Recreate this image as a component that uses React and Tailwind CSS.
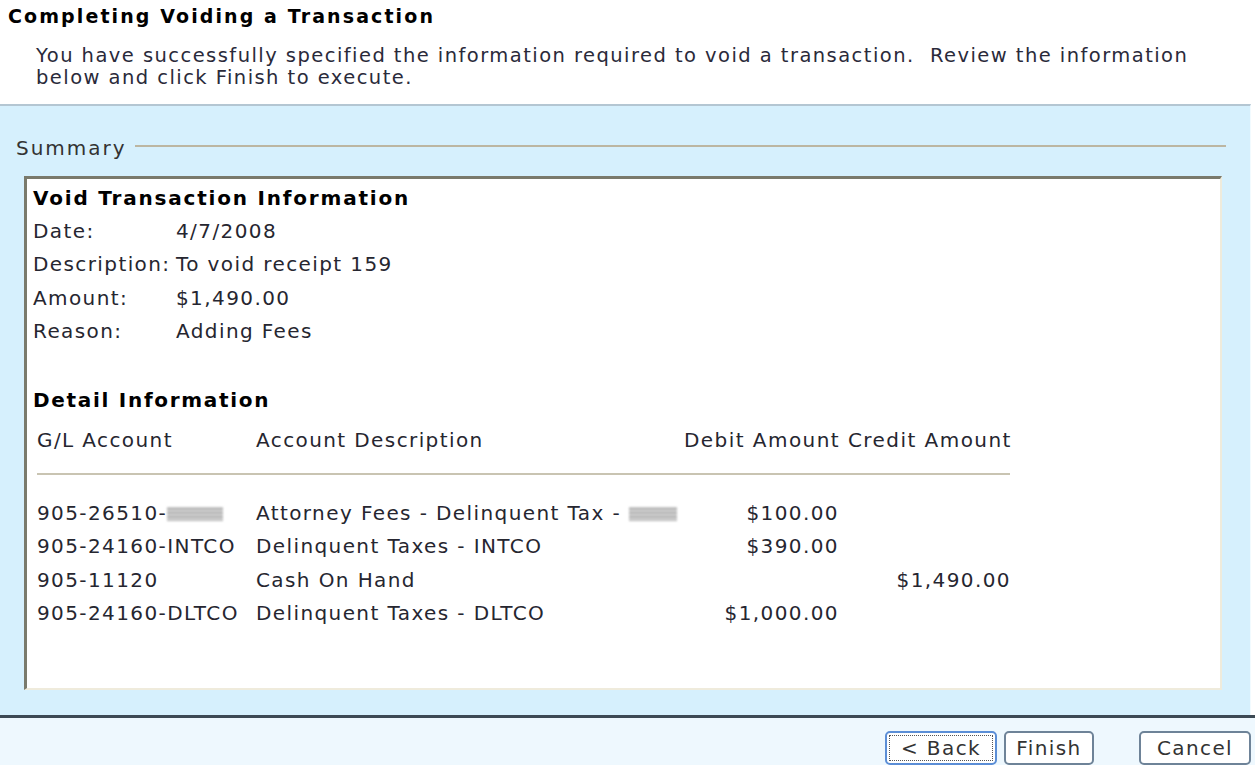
export default function App() {
    const rows = [
        { acct: '905-26510-', blurAcct: true, desc: 'Attorney Fees - Delinquent Tax - ', blurDesc: true, debit: '$100.00', credit: '' },
        { acct: '905-24160-INTCO', desc: 'Delinquent Taxes - INTCO', debit: '$390.00', credit: '' },
        { acct: '905-11120', desc: 'Cash On Hand', debit: '', credit: '$1,490.00' },
        { acct: '905-24160-DLTCO', desc: 'Delinquent Taxes - DLTCO', debit: '$1,000.00', credit: '' },
    ];

    const Blur = ({ w }) => (
        <span className={`inline-block h-[14px] align-middle ${w} bg-[repeating-linear-gradient(180deg,#d0d0d0_0px,#8f8f8f_2px,#e4e4e4_4px)] blur-[1px] opacity-80`}></span>
    );

    return (
        <div className="w-[1255px] h-[765px] bg-white overflow-hidden text-[#262630] font-['DejaVu_Sans',Verdana,sans-serif] flex flex-col">
            {/* header */}
            <div className="pl-[8px] pt-[3px] h-[104px]">
                <div className="text-[19px] font-bold text-black leading-[26px] tracking-[2.1px]">Completing Voiding a Transaction</div>
                <div className="pl-[28px] pt-[16px] text-[19.5px] leading-[22px] text-[#2a2a3a] tracking-[1.45px] whitespace-nowrap">
                    You have successfully specified the information required to void a transaction.&nbsp; Review the information<br />below and click Finish to execute.
                </div>
            </div>

            {/* blue panel */}
            <div className="h-[613px] bg-[#d6f0fd] border-t-2 border-[#b4c6d2] mr-[4px] border-r border-r-[#f2fbff] flex flex-col">
                <div className="flex items-center pl-[16px] pr-[24px] pt-[24px] h-[60px]">
                    <span className="text-[20px] text-[#333] tracking-[2px]">Summary</span>
                    <span className="flex-1 h-[2px] bg-[#bcb6a2] ml-[8px] mt-[-3px]"></span>
                </div>

                <div className="ml-[24px] mr-[28px] mt-[10px] h-[514px] bg-white border-t-[3px] border-l-[3px] border-t-[#7a7a6c] border-l-[#7a7a6c] border-r-2 border-b-2 border-r-[#efebdc] border-b-[#efebdc] pl-[6px] pt-[6px] text-[20px] tracking-[1.4px]">
                    <div className="font-bold text-black leading-[26px] tracking-[1.8px]">Void Transaction Information</div>
                    <div className="leading-[33.5px] mt-[4px]">
                        <div className="flex"><span className="w-[143px]">Date:</span><span>4/7/2008</span></div>
                        <div className="flex"><span className="w-[143px]">Description:</span><span>To void receipt 159</span></div>
                        <div className="flex"><span className="w-[143px]">Amount:</span><span>$1,490.00</span></div>
                        <div className="flex"><span className="w-[143px]">Reason:</span><span>Adding Fees</span></div>
                    </div>

                    <div className="font-bold text-black leading-[26px] mt-[38px] tracking-[1.7px]">Detail Information</div>
                    <div className="flex leading-[26px] mt-[14px] pl-[4px] whitespace-nowrap">
                        <span className="w-[219px]">G/L Account</span>
                        <span className="w-[428px]">Account Description</span>
                        <span className="tracking-[1.45px]">Debit Amount Credit Amount</span>
                    </div>
                    <div className="ml-[4px] w-[973px] h-[2px] bg-[#c9c4b2] mt-[20px]"></div>

                    <div className="leading-[33.5px] mt-[22px] pl-[4px]">
                        {rows.map((r, i) => (
                            <div key={i} className="flex">
                                <span className="w-[219px] whitespace-nowrap">{r.acct}{r.blurAcct && <Blur w="w-[56px]" />}</span>
                                <span className="w-[428px] whitespace-nowrap">{r.desc}{r.blurDesc && <Blur w="w-[48px]" />}</span>
                                <span className="w-[155px] text-right">{r.debit}</span>
                                <span className="w-[172px] text-right">{r.credit}</span>
                            </div>
                        ))}
                    </div>
                </div>
            </div>

            {/* footer */}
            <div className="flex-1 border-t-[3px] border-[#3c4954] bg-[#eef8fe] flex items-start justify-end pt-[13px] pr-[4px] text-[20px] tracking-[1.4px]">
                <button className="w-[112px] h-[34px] rounded-[5px] border-2 border-[#5b8ed6] bg-white p-[2px] mr-[7px]">
                    <span className="block h-full border border-dotted border-[#555] leading-[24px] text-[#333]">&lt; Back</span>
                </button>
                <button className="w-[90px] h-[34px] rounded-[5px] border-2 border-[#6e8398] bg-white leading-[28px] text-[#333] mr-[45px]">Finish</button>
                <button className="w-[112px] h-[34px] rounded-[5px] border-2 border-[#6e8398] bg-white leading-[28px] text-[#333]">Cancel</button>
            </div>
        </div>
    );
}
